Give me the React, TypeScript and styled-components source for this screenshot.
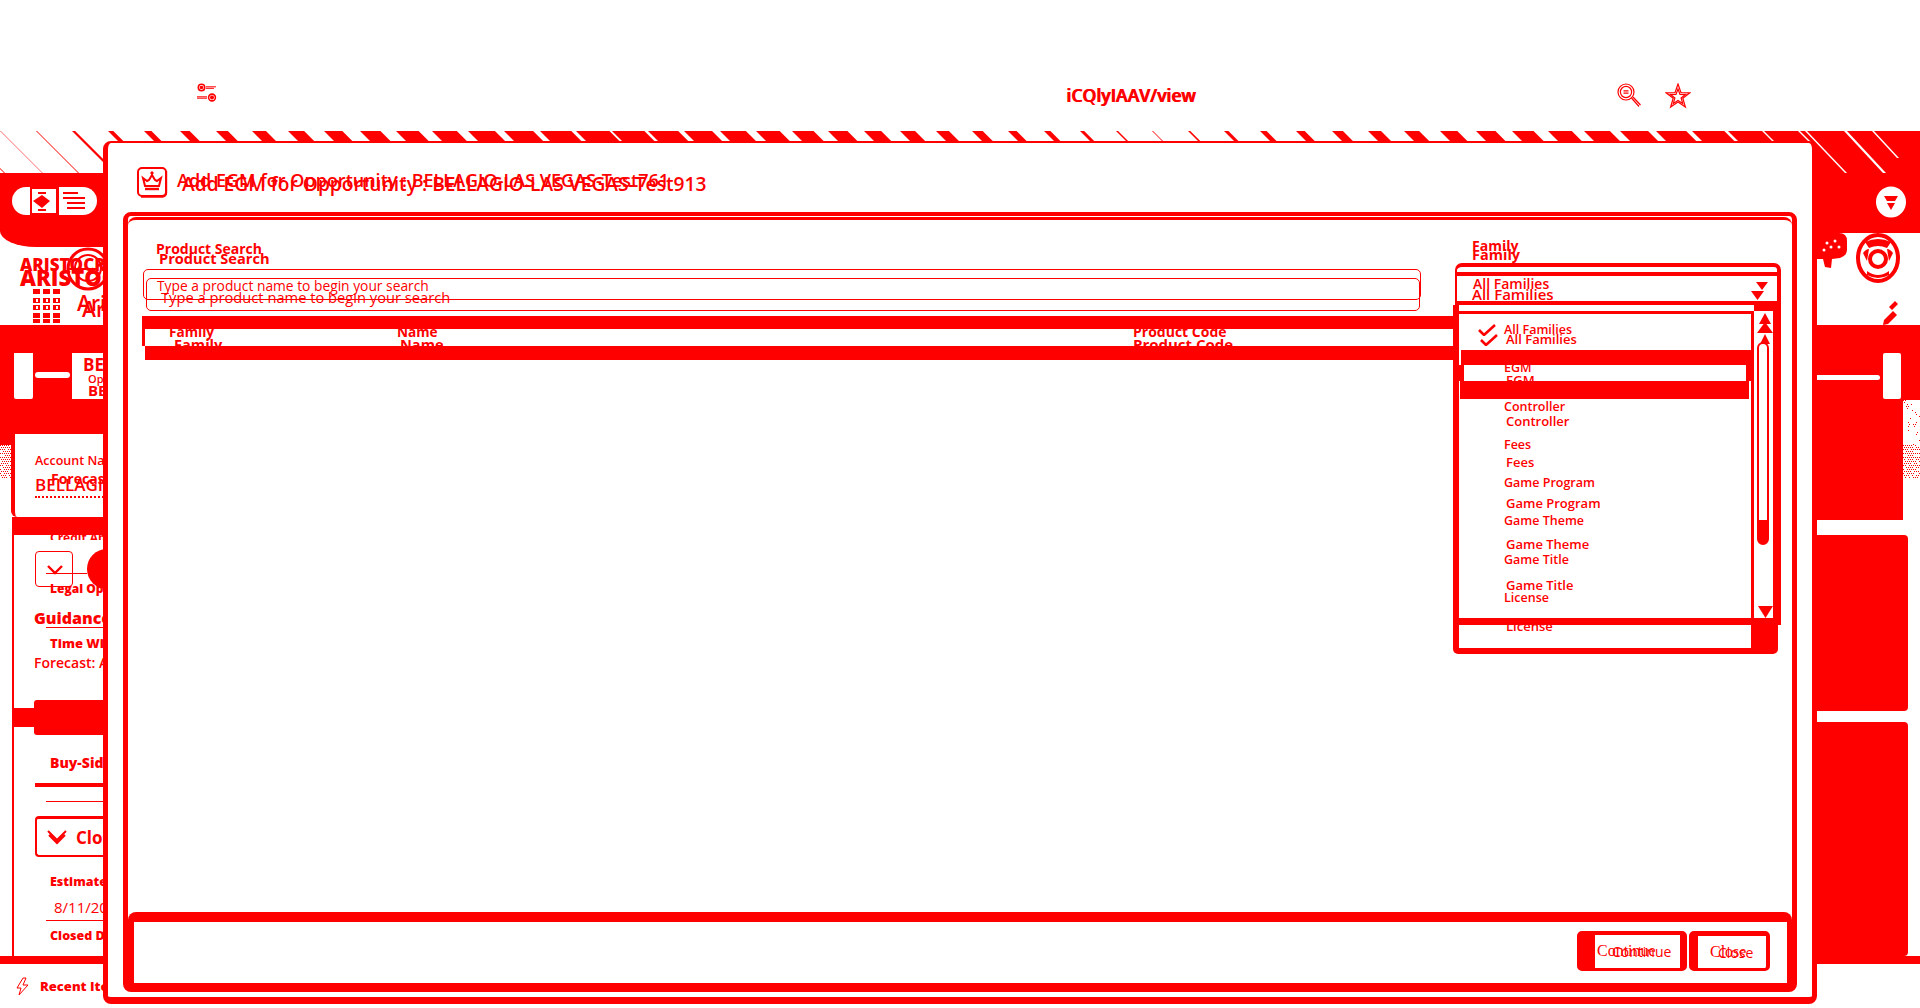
import React from "react";
import styled, { createGlobalStyle } from "styled-components";

const RED = "#ff0000";
const FONT = `"Open Sans", "Liberation Sans", sans-serif`;

const Global = createGlobalStyle`
  html, body { margin: 0; padding: 0; background: #fff; overflow: hidden; height: 1008px; }
  body { font-family: ${FONT}; color: ${RED}; }
  * { box-sizing: border-box; }
  svg { flex: none; }
`;

const Page = styled.div`
  position: relative;
  width: 1920px;
  height: 1008px;
  overflow: hidden;
  display: flex;
  flex-direction: column;
`;

const TopBar = styled.div`
  height: 131px;
  display: grid;
  grid-template-columns: 197px 869px 551px 48px 1fr;
  padding-top: 83px;
  align-items: start;
`;
const Url = styled.div`
  grid-column: 3;
  line-height: 24px;
`;
const Slot = styled.div<{ $col: number }>`
  grid-column: ${(p) => p.$col};
  line-height: 0;
`;

const Doubled = styled.span<{ $size: number; $weight?: number; $serif?: boolean }>`
  position: relative;
  display: inline-block;
  white-space: nowrap;
  font-size: ${(p) => p.$size}px;
  font-weight: ${(p) => p.$weight ?? 600};
  font-family: ${(p) => (p.$serif ? `"Liberation Serif", serif` : FONT)};
`;
const Ghost = styled.span<{ $dx: number; $dy: number; $size: number; $sans?: boolean }>`
  position: absolute;
  left: ${(p) => p.$dx}px;
  top: ${(p) => p.$dy}px;
  font-size: ${(p) => p.$size}px;
  font-family: ${(p) => (p.$sans ? FONT : "inherit")};
`;

const Band = styled.svg`
  display: block;
  width: 1920px;
  height: 42px;
  flex: none;
`;

const Main = styled.div`
  flex: 1;
  display: flex;
  justify-content: space-between;
  min-height: 0;
`;

/* ---------- left column ---------- */
const LeftCol = styled.div`
  width: 104px;
  display: flex;
  flex-direction: column;
  overflow: hidden;
`;
const PillBar = styled.div`
  height: 74px;
  background: ${RED};
  padding: 14px 0 0 12px;
  border-radius: 0 0 0 36px / 0 0 0 16px;
  line-height: 0;
`;
const LogoArea = styled.div`
  position: relative;
  height: 78px;
  padding: 6px 0 0 20px;
  overflow: hidden;
`;
const Ring = styled.svg`
  position: absolute;
  left: 66px;
  top: 0;
`;
const LogoLower = styled.div`
  display: flex;
  align-items: flex-start;
  margin: 13px 0 0 13px;
  gap: 16px;
`;
const RedSection = styled.div`
  height: 109px;
  background: ${RED};
  padding-top: 28px;
`;
const HeadRow = styled.div`
  display: flex;
  height: 46px;
`;
const Tile = styled.div`
  width: 19px;
  margin-left: 14px;
  background: #fff;
  border-radius: 0 0 2px 2px;
`;
const TileGap = styled.div`
  width: 39px;
  padding: 19px 2px 0;
`;
const TileBar = styled.div`
  height: 6px;
  background: #fff;
  border-radius: 3px;
`;
const HeadText = styled.div`
  flex: 1;
  background: #fff;
  padding-left: 11px;
  overflow: hidden;
`;
const HeadLine = styled.div<{ $size: number; $ml?: number; $h: number; $w?: number }>`
  font-size: ${(p) => p.$size}px;
  line-height: ${(p) => p.$h}px;
  height: ${(p) => p.$h}px;
  margin-left: ${(p) => p.$ml ?? 0}px;
  font-weight: ${(p) => p.$w ?? 700};
  white-space: nowrap;
`;
const AccountRow = styled.div`
  display: flex;
  height: 83px;
`;
const SpeckleCol = styled.div`
  width: 11px;
  line-height: 0;
`;
const SpeckleCap = styled.div`
  height: 11px;
  background: ${RED};
`;
const AccountCard = styled.div`
  flex: 1;
  border-left: 4px solid ${RED};
  border-radius: 0 0 0 6px;
  padding: 18px 0 0 20px;
  overflow: hidden;
  white-space: nowrap;
`;
const AccountLabel = styled.div`
  font-size: 12.5px;
  line-height: 18px;
  font-weight: 600;
`;
const AccountName = styled.div`
  position: relative;
  font-size: 17px;
  font-weight: 600;
  line-height: 22px;
  margin-top: 4px;
  width: 80px;
  border-bottom: 2px dotted ${RED};
`;
const AccountOver = styled.span`
  position: absolute;
  left: 16px;
  top: -6px;
  font-size: 14px;
  font-weight: 700;
`;
const RedStrip = styled.div`
  height: 18px;
  margin-left: 12px;
  background: ${RED};
`;
const Sheet = styled.div`
  height: 421px;
  margin-left: 12px;
  border-left: 2px solid ${RED};
  display: flex;
  flex-direction: column;
  white-space: nowrap;
  overflow: hidden;
`;
const Clip = styled.div`
  height: 5px;
  overflow: hidden;
  margin-left: 36px;
  font-size: 12px;
  font-weight: 700;
  line-height: 5px;
`;
const CheckRow = styled.div`
  position: relative;
  display: flex;
  align-items: center;
  height: 36px;
  margin: 11px 0 0 21px;
`;
const CheckBox = styled.div`
  width: 38px;
  height: 36px;
  border: 1px solid ${RED};
  border-radius: 4px;
  line-height: 0;
  padding: 12px 0 0 10px;
  flex: none;
`;
const Dot = styled.div`
  width: 40px;
  height: 40px;
  border-radius: 50%;
  background: ${RED};
  margin-left: 14px;
  flex: none;
`;
const CrossLine = styled.div`
  position: absolute;
  left: 11px;
  top: 22px;
  width: 41px;
  height: 1px;
  background: ${RED};
`;
const Line = styled.div<{ $ml: number; $mt: number; $h?: number }>`
  margin: ${(p) => p.$mt}px 0 0 ${(p) => p.$ml}px;
  height: ${(p) => p.$h ?? 1}px;
  background: ${RED};
  flex: none;
`;
const Txt = styled.div<{ $ml: number; $mt: number; $size: number; $lh: number; $w?: number }>`
  margin: ${(p) => p.$mt}px 0 0 ${(p) => p.$ml}px;
  font-size: ${(p) => p.$size}px;
  line-height: ${(p) => p.$lh}px;
  font-weight: ${(p) => p.$w ?? 700};
  flex: none;
`;
const BlockRow = styled.div`
  display: flex;
  align-items: center;
  height: 35px;
  margin-top: 28px;
  flex: none;
`;
const BlockTab = styled.div`
  width: 20px;
  height: 19px;
  background: ${RED};
`;
const BlockFill = styled.div`
  flex: 1;
  height: 35px;
  background: ${RED};
  border-radius: 3px 0 0 3px;
`;
const OutlineBox = styled.div`
  display: flex;
  align-items: center;
  gap: 9px;
  height: 41px;
  margin: 14px 0 0 21px;
  padding-left: 10px;
  border: 2px solid ${RED};
  border-right: 0;
  border-top-width: 3px;
  border-radius: 4px 0 0 4px;
  font-size: 17px;
  font-weight: 700;
  flex: none;
`;
const StripeLine = styled.div`
  height: 8px;
  background: ${RED};
  flex: none;
`;
const RecentRow = styled.div`
  display: flex;
  align-items: center;
  gap: 11px;
  height: 44px;
  padding-left: 16px;
  font-size: 13px;
  font-weight: 800;
  white-space: nowrap;
`;

/* ---------- right column ---------- */
const RightCol = styled.div`
  width: 108px;
  display: flex;
  flex-direction: column;
  overflow: hidden;
`;
const RightHead = styled.div`
  height: 60px;
  background: ${RED};
  padding: 13px 0 0 62px;
  line-height: 0;
`;
const RightTools = styled.div`
  position: relative;
  height: 92px;
  border-left: 5px solid ${RED};
  line-height: 0;
`;
const ToolsArt = styled.svg`
  display: block;
`;
const RightUpper = styled.div`
  display: flex;
  height: 195px;
  flex: none;
`;
const RightFill = styled.div`
  width: 91px;
  background: ${RED};
  display: flex;
  padding: 28px 0 0 5px;
  align-items: flex-start;
`;
const RightStrip = styled.div`
  width: 63px;
  height: 5px;
  margin-top: 22px;
  background: #fff;
  border-radius: 0 3px 3px 0;
`;
const RightTab = styled.div`
  width: 18px;
  height: 46px;
  margin-left: 3px;
  background: #fff;
  border-radius: 2px;
`;
const RightSide = styled.div`
  flex: 1;
  line-height: 0;
`;
const RightCap = styled.div`
  height: 75px;
  background: ${RED};
`;
const RightGap = styled.div<{ $h: number }>`
  height: ${(p) => p.$h}px;
  width: 91px;
  border-left: 5px solid ${RED};
  flex: none;
`;
const RightBlock = styled.div<{ $h: number }>`
  height: ${(p) => p.$h}px;
  width: 96px;
  background: ${RED};
  border-radius: 0 4px 4px 0;
  flex: none;
`;

/* ---------- modal ---------- */
const Modal = styled.div`
  position: absolute;
  left: 103px;
  top: 141px;
  width: 1714px;
  height: 863px;
  background: #fff;
  border: solid ${RED};
  border-width: 2px 5px 7px 5px;
  border-radius: 8px;
  display: flex;
  flex-direction: column;
`;
const ModalHead = styled.div`
  height: 69px;
  padding: 24px 0 0 29px;
  display: flex;
  align-items: flex-start;
  gap: 9px;
  flex: none;
`;
const Title = styled.div`
  margin-top: 2px;
  line-height: 22px;
`;
const Card = styled.div`
  height: 780px;
  margin: 0 15px;
  border: solid ${RED};
  border-width: 4px 5px 9px 5px;
  border-radius: 8px;
  display: flex;
  flex-direction: column;
  flex: none;
`;
const CardInner = styled.div`
  flex: 1;
  margin-top: 1px;
  border-top: 3px solid ${RED};
  border-radius: 8px 8px 0 0;
  display: flex;
  min-height: 0;
`;
const SearchCol = styled.div`
  width: 1325px;
  padding: 20px 0 0 14px;
  flex: none;
`;
const Label = styled.div`
  line-height: 16px;
  height: 16px;
  margin-left: 14px;
`;
const Field = styled.div`
  position: relative;
  margin: 13px 0 0 1px;
  width: 1278px;
  height: 31px;
  border: 1px solid ${RED};
  border-radius: 5px;
  padding-left: 13px;
  line-height: 30px;
`;
const FieldGhost = styled.div`
  position: absolute;
  left: 2px;
  top: 8px;
  width: 1274px;
  height: 33px;
  border: 1px solid ${RED};
  border-radius: 5px;
`;
const Bar = styled.div<{ $h: number; $ml?: number; $mr?: number }>`
  height: ${(p) => p.$h}px;
  margin: 0 ${(p) => p.$mr ?? 0}px 0 ${(p) => p.$ml ?? 0}px;
  background: ${RED};
  flex: none;
`;
const TableHead = styled.div`
  margin-top: 16px;
`;
const HeadCells = styled.div`
  display: grid;
  grid-template-columns: 228px 736px 1fr;
  height: 17px;
  padding-left: 24px;
  border-left: 3px solid ${RED};
  overflow: hidden;
  line-height: 14px;
`;
const HeadCell = styled.div`
  margin-top: -5px;
`;
const FamilyCol = styled.div`
  flex: 1;
  padding-top: 17px;
  min-width: 0;
`;
const FamilyLabel = styled.div`
  margin-left: 19px;
  line-height: 16px;
  height: 16px;
`;
const SelectWrap = styled.div`
  position: relative;
  margin: 10px 0 0 2px;
  width: 326px;
  height: 42px;
`;
const SelectFrame = styled.div`
  height: 42px;
  border: solid ${RED};
  border-width: 4px 4px 4px 2px;
  border-radius: 7px 7px 0 0;
  padding-top: 5px;
`;
const SelectInner = styled.div`
  position: relative;
  box-sizing: content-box;
  height: 25px;
  border-top: 4px solid ${RED};
  padding-left: 16px;
  line-height: 14px;
  margin-bottom: -4px;
`;
const Caret = styled.svg`
  position: absolute;
  left: 294px;
  top: 6px;
`;
const Menu = styled.div`
  position: absolute;
  left: -2px;
  top: 42px;
  width: 328px;
  height: 349px;
  background: #fff;
  display: grid;
  z-index: 2;
`;
const ItemList = styled.div<{ $pt: number; $pl: number; $pitch: number; $size: number }>`
  grid-area: 1 / 1;
  padding: ${(p) => p.$pt}px 0 0 ${(p) => p.$pl}px;
  font-size: ${(p) => p.$size}px;
  font-weight: 600;
  line-height: ${(p) => p.$pitch}px;
  min-width: 0;
`;
const Item = styled.div<{ $pitch: number }>`
  display: flex;
  height: ${(p) => p.$pitch}px;
  white-space: nowrap;
`;
const CheckSlot = styled.div`
  width: 26px;
  flex: none;
  display: flex;
  align-items: center;
`;
const MenuChrome = styled.div`
  grid-area: 1 / 1;
  display: flex;
  position: relative;
`;
const MenuEdge = styled.div`
  width: 6px;
  background: ${RED};
  border-radius: 0 0 0 5px;
`;
const MenuMid = styled.div`
  width: 292px;
  display: flex;
  flex-direction: column;
`;
const MidStrip = styled.div`
  height: 6px;
  background: #fff;
`;
const MidGap = styled.div`
  height: 36px;
`;
const Hover = styled.div`
  height: 16px;
  border: solid ${RED};
  border-width: 0 5px;
  overflow: hidden;
`;
const HoverLabel = styled.div`
  margin-left: 40px;
  font-size: 12.5px;
  font-weight: 600;
  line-height: 14px;
  margin-top: -4px;
`;
const Grow = styled.div`
  flex: 1;
`;
const BottomBand = styled.div`
  height: 23px;
  flex: none;
`;
const ScrollCol = styled.div`
  width: 30px;
  display: flex;
  flex-direction: column;
`;
const ScrollTop = styled.div`
  height: 6px;
  margin-left: 3px;
  background: ${RED};
`;
const ScrollTrack = styled.div`
  flex: 1;
  position: relative;
  background: #fff;
  border-left: 3px solid ${RED};
  border-right: 8px solid ${RED};
  line-height: 0;
`;
const ArrowUp = styled.svg`
  position: absolute;
  left: 3px;
  top: 2px;
`;
const ArrowDown = styled.svg`
  position: absolute;
  left: 4px;
  top: 295px;
`;
const Thumb = styled.div`
  position: absolute;
  left: 3px;
  top: 31px;
  width: 12px;
  height: 203px;
  border: 2px solid ${RED};
  border-radius: 6px;
  border-bottom-width: 25px;
`;
const ScrollBlock = styled.div`
  height: 29px;
  margin-right: 3px;
  background: ${RED};
  border-radius: 0 0 5px 0;
`;
const ScrollRule = styled.div`
  height: 7px;
  background: ${RED};
`;
const Footer = styled.div`
  height: 71px;
  border: solid ${RED};
  border-width: 10px 5px 0 6px;
  border-radius: 8px 8px 0 0;
  display: flex;
  justify-content: flex-end;
  gap: 2px;
  padding: 9px 17px 0 0;
  flex: none;
`;
const Btn = styled.div<{ $w: number; $l: number; $r: number; $t: number; $pad: number }>`
  width: ${(p) => p.$w}px;
  height: 40px;
  border: solid ${RED};
  border-width: ${(p) => p.$t}px ${(p) => p.$r}px 3px ${(p) => p.$l}px;
  border-radius: 5px;
  padding-left: ${(p) => p.$pad}px;
  line-height: 31px;
`;

/* ---------- drawings ---------- */
const tri = (x: number) => {
  if (x < 20) return 0;
  if (x < 585) return (34 * (x - 20)) / 565;
  if (x < 1150) return (34 * (1150 - x)) / 565;
  if (x < 1720) return (34 * (x - 1150)) / 570;
  return 34;
};

const Stripes = () => {
  const items: React.ReactElement[] = [];
  for (let k = 1; k <= 50; k++) {
    const x = 36 * k;
    const w = Math.max(tri(x), 1);
    items.push(<polygon key={k} fill={RED} points={`${x},0 ${x + w},0 ${x + w + 42},42 ${x + 42},42`} />);
  }
  return (
    <Band viewBox="0 0 1920 42">
      {items}
      <polygon fill={RED} points="0,0 0.8,0 42.8,42 42,42" opacity="0.7" />
      <polygon fill={RED} points="-38,0 -37,0 5,42 4,42" />
      <rect x="1812" y="0" width="108" height="42" fill={RED} />
      <polygon fill="#fff" points="1805,0 1807,0 1847,42 1845,42" />
      <polygon fill="#fff" points="1844,0 1847,0 1886,42 1883,42" />
      <polygon fill="#fff" points="1872,0 1874,0 1899,27 1897,27" />
    </Band>
  );
};

const Speckle = ({ w, h, dense }: { w: number; h: number; dense: number }) => {
  const dots: React.ReactElement[] = [];
  for (let y = 0; y < h; y += 2) {
    for (let x = (y / 2) % 2; x < w; x += 2) {
      const v = Math.sin(x * 12.9898 + y * 78.233) * 43758.5453;
      if (v - Math.floor(v) < dense) dots.push(<rect key={`${x}-${y}`} x={x} y={y} width="1" height="1" fill={RED} />);
    }
  }
  return (
    <svg width={w} height={h} viewBox={`0 0 ${w} ${h}`}>
      {dots}
    </svg>
  );
};

const SlidersIcon = () => (
  <svg width="20" height="20" viewBox="0 0 20 20" fill="none" stroke={RED} strokeWidth="1.6">
    <circle cx="4.5" cy="4.5" r="3.2" />
    <circle cx="4.5" cy="4.5" r="1" fill={RED} />
    <path d="M9 3.8h10M9 5.3h8" strokeWidth="1" />
    <circle cx="15" cy="14.5" r="3.4" />
    <circle cx="15" cy="14.5" r="1.2" fill={RED} />
    <path d="M0 13.8h10M0 15.2h10" strokeWidth="1" />
  </svg>
);
const ZoomIcon = () => (
  <svg width="24" height="24" viewBox="0 0 24 24" fill="none" stroke={RED} strokeWidth="1.2">
    <circle cx="9" cy="9" r="8" />
    <circle cx="9" cy="9" r="5.6" />
    <path d="M6.5 7.8h5M6.5 10.2h5" />
    <path d="M14.5 15l7.5 8.5M16 14l7.5 8" />
  </svg>
);
const StarIcon = () => (
  <svg width="26" height="26" viewBox="0 0 26 26" fill="none" stroke={RED} strokeWidth="1.2">
    <path d="M13 1l3 8.6 9 .2-7.2 5.4 2.6 8.8L13 19l-7.4 5 2.6-8.8L1 9.8l9-.2z" />
    <path d="M13 6l2 5.4 5.6.2-4.5 3.4 1.6 5.4L13 17.4 8.3 20.4 9.9 15l-4.5-3.4 5.6-.2z" />
  </svg>
);
const CrownIcon = () => (
  <svg width="31" height="31" viewBox="0 0 31 31" fill="none" stroke={RED}>
    <rect x="1" y="1" width="28" height="28" rx="4" strokeWidth="2" />
    <path d="M29.5 4v22a4 4 0 0 1-4 4H4" strokeWidth="1.4" />
    <path d="M6 11l4 3 2-1 3-5 3 5 2 1 4-3-2 8H8z" strokeWidth="2" />
    <path d="M8 22h14" strokeWidth="2.4" />
    <circle cx="15" cy="6" r="1.2" fill={RED} />
  </svg>
);
const PillArt = () => (
  <svg width="85" height="28" viewBox="0 0 85 28">
    <rect x="0" y="0" width="85" height="28" rx="14" fill="#fff" />
    <path d="M18 0h2v28h-2zM44 0h3v28h-3zM18 0h27v2H18zM18 26h27v2H18z" fill={RED} />
    <path d="M30 8l8 6-8 7-9-7z" fill={RED} />
    <path d="M26 5h8v2h-8zM26 22h8v2h-8z" fill={RED} />
    <path d="M51 5h15v2H51zM51 10h22v2H51zM55 15h18v2H55zM55 20h18v2H55z" fill={RED} />
  </svg>
);
const LogoRing = () => (
  <Ring width="40" height="44" viewBox="0 0 40 44" fill="none" stroke={RED} strokeWidth="3">
    <circle cx="22" cy="22" r="20" />
    <circle cx="22" cy="21" r="13" strokeWidth="2" />
    <path d="M2 22h30" strokeWidth="2" />
  </Ring>
);
const GridDots = () => (
  <svg width="28" height="34" viewBox="0 0 28 34" fill={RED}>
    {[0, 9, 16, 24, 30].map((y) =>
      [0, 10, 20].map((x) => <rect key={`${x}-${y}`} x={x} y={y} width="7" height={y === 30 ? 4 : 5} />)
    )}
    {[9, 16].map((y) => [3, 13, 23].map((x) => <rect key={`w${x}-${y}`} x={x} y={y + 1} width="2" height="3" fill="#fff" />))}
  </svg>
);
const ChevronSmall = () => (
  <svg width="18" height="12" viewBox="0 0 18 12" fill="none" stroke={RED} strokeWidth="2.4">
    <path d="M2 2l7 7 7-7" />
  </svg>
);
const DoubleChevron = () => (
  <svg width="20" height="16" viewBox="0 0 20 16" fill="none" stroke={RED} strokeWidth="2">
    <path d="M1 2l9 9 9-9M2 6l8 8 8-8" />
  </svg>
);
const Bolt = () => (
  <svg width="13" height="19" viewBox="0 0 13 19" fill="none" stroke={RED} strokeWidth="1">
    <path d="M7 1L1 11h4l-2 7 9-10H7l3-7z" />
  </svg>
);
const OvalArt = () => (
  <svg width="34" height="32" viewBox="0 0 34 32">
    <ellipse cx="17" cy="16" rx="15" ry="15.5" fill="#fff" />
    <path d="M10 10h14l-3 5h-8z" fill={RED} />
    <path d="M13 17h8l-4 7z" fill={RED} />
  </svg>
);
const ToolsDrawing = () => (
  <ToolsArt width="103" height="92" viewBox="0 0 103 92">
    <path d="M0 0h22q8 0 8 8v8q0 7-7 9l-8 1-1 9-6-1-2-8H0z" fill={RED} />
    <circle cx="10" cy="10" r="1.5" fill="#fff" />
    <circle cx="18" cy="8" r="1.5" fill="#fff" />
    <circle cx="14" cy="14" r="1.5" fill="#fff" />
    <circle cx="22" cy="14" r="1.5" fill="#fff" />
    <circle cx="7" cy="17" r="1.5" fill="#fff" />
    <ellipse cx="61" cy="25" rx="20" ry="23" fill="none" stroke={RED} strokeWidth="4" />
    <circle cx="61" cy="26" r="8" fill="none" stroke={RED} strokeWidth="4" />
    <path d="M48 9q13-6 26 0l-4 6q-9-4-18 0z" fill={RED} />
    <path d="M50 38q11 8 22 0v4q-11 6-22 0z" fill={RED} />
    <path d="M46 20q3-4 6-4l-2 12zM76 20q-3-4-6-4l2 12z" fill={RED} />
    <path d="M72 74l6-6 3 3-6 6zM66 92l1-5 9-9 4 4-9 9z" fill={RED} />
  </ToolsArt>
);
const CheckMark = () => (
  <svg width="18" height="12" viewBox="0 0 18 12" fill="none" stroke={RED} strokeWidth="2.6">
    <path d="M1 6l5 5L17 1" />
  </svg>
);

const families = ["All Families", "EGM", "Controller", "Fees", "Game Program", "Game Theme", "Game Title", "License"];

const List = ({ pt, pl, pitch, size, hide }: { pt: number; pl: number; pitch: number; size: number; hide: string }) => (
  <ItemList $pt={pt} $pl={pl} $pitch={pitch} $size={size}>
    {families.map((f, i) => (
      <Item key={f} $pitch={pitch}>
        <CheckSlot>{i === 0 ? <CheckMark /> : null}</CheckSlot>
        {f === hide ? "" : f}
      </Item>
    ))}
  </ItemList>
);

export default function App() {
  return (
    <Page>
      <Global />
      <TopBar>
        <Slot $col={2}>
          <SlidersIcon />
        </Slot>
        <Url>
          <Doubled $size={17.6}>
            iCOlyIAAV/view
            <Ghost $dx={1} $dy={0} $size={17.6}>
              iCQlyIAAV/view
            </Ghost>
          </Doubled>
        </Url>
        <Slot $col={4}>
          <ZoomIcon />
        </Slot>
        <Slot $col={5}>
          <StarIcon />
        </Slot>
      </TopBar>
      <Stripes />
      <Main>
        <LeftCol>
          <PillBar>
            <PillArt />
          </PillBar>
          <LogoArea>
            <Doubled $size={17} $weight={800}>
              ARISTOCRAT
              <Ghost $dx={0} $dy={9} $size={22}>
                ARISTOCRAT
              </Ghost>
            </Doubled>
            <LogoRing />
            <LogoLower>
              <GridDots />
              <Doubled $size={21} $weight={600}>
                Aristocrat
                <Ghost $dx={5} $dy={6} $size={21}>
                  Aristocrat
                </Ghost>
              </Doubled>
            </LogoLower>
          </LogoArea>
          <RedSection>
            <HeadRow>
              <Tile />
              <TileGap>
                <TileBar />
              </TileGap>
              <HeadText>
                <HeadLine $size={17} $h={24}>
                  BELLAGIO
                </HeadLine>
                <HeadLine $size={11} $ml={5} $h={4} $w={600}>
                  Opportunity
                </HeadLine>
                <HeadLine $size={15} $ml={5} $h={18}>
                  BELLAGIO
                </HeadLine>
              </HeadText>
            </HeadRow>
          </RedSection>
          <AccountRow>
            <SpeckleCol>
              <SpeckleCap />
              <Speckle w={11} h={33} dense={0.75} />
            </SpeckleCol>
            <AccountCard>
              <AccountLabel>Account Name</AccountLabel>
              <AccountName>
                BELLAGIO
                <AccountOver>Forecast</AccountOver>
              </AccountName>
            </AccountCard>
          </AccountRow>
          <RedStrip />
          <Sheet>
            <Clip>Credit Approval</Clip>
            <CheckRow>
              <CheckBox>
                <ChevronSmall />
              </CheckBox>
              <Dot />
              <CrossLine />
            </CheckRow>
            <Txt $ml={36} $mt={-5} $size={12} $lh={14} $w={800}>
              Legal Opinion
            </Txt>
            <Txt $ml={20} $mt={11} $size={16} $lh={22} $w={800}>
              Guidance
            </Txt>
            <Line $ml={32} $mt={-2} />
            <Txt $ml={36} $mt={7} $size={13} $lh={16} $w={800}>
              Time Window
            </Txt>
            <Txt $ml={20} $mt={3} $size={14} $lh={18} $w={600}>
              Forecast: A
            </Txt>
            <BlockRow>
              <BlockTab />
              <BlockFill />
            </BlockRow>
            <Txt $ml={36} $mt={20} $size={14} $lh={16} $w={800}>
              Buy-Side
            </Txt>
            <Line $ml={21} $mt={12} $h={4} />
            <Line $ml={32} $mt={14} />
            <OutlineBox>
              <DoubleChevron />
              Closed
            </OutlineBox>
            <Txt $ml={36} $mt={17} $size={12.5} $lh={16} $w={800}>
              Estimated Close
            </Txt>
            <Txt $ml={40} $mt={7} $size={15} $lh={20} $w={400}>
              8/11/2025
            </Txt>
            <Line $ml={32} $mt={3} />
            <Txt $ml={36} $mt={7} $size={12.5} $lh={16} $w={800}>
              Closed Date
            </Txt>
          </Sheet>
          <StripeLine />
          <RecentRow>
            <Bolt />
            Recent Items
          </RecentRow>
        </LeftCol>
        <RightCol>
          <RightHead>
            <OvalArt />
          </RightHead>
          <RightTools>
            <ToolsDrawing />
          </RightTools>
          <RightUpper>
            <RightFill>
              <RightStrip />
              <RightTab />
            </RightFill>
            <RightSide>
              <RightCap />
              <Speckle w={17} h={45} dense={0.12} />
              <Speckle w={17} h={33} dense={0.7} />
            </RightSide>
          </RightUpper>
          <RightGap $h={15} />
          <RightBlock $h={176} />
          <RightGap $h={11} />
          <RightBlock $h={234} />
          <StripeLine />
        </RightCol>
      </Main>
      <Modal>
        <ModalHead>
          <CrownIcon />
          <Title>
            <Doubled $size={18}>
              Add EGM for Opportunity : BELLAGIO-LAS VEGAS-Test761
              <Ghost $dx={5} $dy={4} $size={19.2}>
                Add EGM for Opportunity : BELLAGIO-LAS VEGAS-Test913
              </Ghost>
            </Doubled>
          </Title>
        </ModalHead>
        <Card>
          <CardInner>
            <SearchCol>
              <Label>
                <Doubled $size={14} $weight={700}>
                  Product Search
                  <Ghost $dx={3} $dy={9} $size={14.6}>
                    Product Search
                  </Ghost>
                </Doubled>
              </Label>
              <Field>
                <FieldGhost />
                <Doubled $size={13.8} $weight={500}>
                  Type a product name to begin your search
                  <Ghost $dx={4} $dy={11} $size={14.7}>
                    Type a product name to begin your search
                  </Ghost>
                </Doubled>
              </Field>
              <TableHead>
                <Bar $h={13} />
                <HeadCells>
                  <HeadCell>
                    <Doubled $size={13.6} $weight={700}>
                      Family
                      <Ghost $dx={5} $dy={12} $size={14.6}>
                        Family
                      </Ghost>
                    </Doubled>
                  </HeadCell>
                  <HeadCell>
                    <Doubled $size={13.6} $weight={700}>
                      Name
                      <Ghost $dx={3} $dy={12} $size={14.6}>
                        Name
                      </Ghost>
                    </Doubled>
                  </HeadCell>
                  <HeadCell>
                    <Doubled $size={14} $weight={700}>
                      Product Code
                      <Ghost $dx={0} $dy={12} $size={15}>
                        Product Code
                      </Ghost>
                    </Doubled>
                  </HeadCell>
                </HeadCells>
                <Bar $h={14} $ml={3} />
              </TableHead>
            </SearchCol>
            <FamilyCol>
              <FamilyLabel>
                <Doubled $size={14} $weight={700}>
                  Family
                  <Ghost $dx={0} $dy={9} $size={14.5}>
                    Family
                  </Ghost>
                </Doubled>
              </FamilyLabel>
              <SelectWrap>
                <SelectFrame>
                  <SelectInner>
                    <Doubled $size={14} $weight={600}>
                      All Families
                      <Ghost $dx={-1} $dy={10} $size={15}>
                        All Families
                      </Ghost>
                    </Doubled>
                    <Caret width="18" height="20" viewBox="0 0 18 20" fill={RED}>
                      <path d="M5 0h12l-6 8zM0 9h13l-6.5 9z" />
                    </Caret>
                  </SelectInner>
                </SelectFrame>
                <Menu>
                  <List pt={6} pl={25} pitch={38.3} size={12.5} hide="EGM" />
                  <List pt={14} pl={27} pitch={41} size={13} hide="EGM" />
                  <MenuChrome>
                    <MenuEdge />
                    <MenuMid>
                      <MidStrip />
                      <Bar $h={3} />
                      <MidGap />
                      <Bar $h={15} $ml={2} />
                      <Hover>
                        <HoverLabel>
                          <Doubled $size={12.5}>
                            EGM
                            <Ghost $dx={2} $dy={12} $size={13}>
                              EGM
                            </Ghost>
                          </Doubled>
                        </HoverLabel>
                      </Hover>
                      <Bar $h={18} $ml={1} $mr={2} />
                      <Grow />
                      <Bar $h={7} />
                      <BottomBand />
                      <Bar $h={6} />
                    </MenuMid>
                    <ScrollCol>
                      <ScrollTop />
                      <ScrollTrack>
                        <ArrowUp width="16" height="33" viewBox="0 0 16 33" fill={RED}>
                          <path d="M8 0l6 11H2zM8 9l8 11H0zM8 21l5 10H3z" />
                        </ArrowUp>
                        <Thumb />
                        <ArrowDown width="15" height="12" viewBox="0 0 15 12" fill={RED}>
                          <path d="M0 0h15l-7.5 12z" />
                        </ArrowDown>
                      </ScrollTrack>
                      <ScrollRule />
                      <ScrollBlock />
                    </ScrollCol>
                  </MenuChrome>
                </Menu>
              </SelectWrap>
            </FamilyCol>
          </CardInner>
          <Footer>
            <Btn $w={110} $l={18} $r={7} $t={4} $pad={2}>
              <Doubled $size={16} $weight={400} $serif>
                Continue
                <Ghost $dx={15} $dy={1} $size={14} $sans>
                  Continue
                </Ghost>
              </Doubled>
            </Btn>
            <Btn $w={81} $l={9} $r={4} $t={5} $pad={12}>
              <Doubled $size={16} $weight={400} $serif>
                Close
                <Ghost $dx={8} $dy={1} $size={14} $sans>
                  Close
                </Ghost>
              </Doubled>
            </Btn>
          </Footer>
        </Card>
      </Modal>
    </Page>
  );
}
